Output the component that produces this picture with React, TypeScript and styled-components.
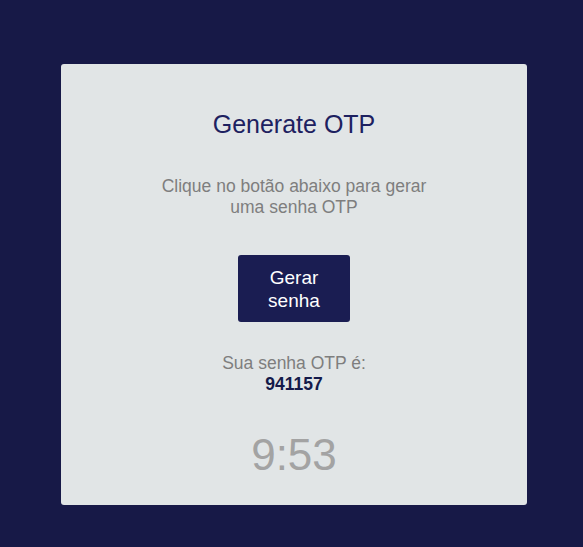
import React from "react";
import styled, { createGlobalStyle } from "styled-components";

const Global = createGlobalStyle`
  html, body { margin: 0; padding: 0; background: #171947; }
  body { font-family: "Liberation Sans", Arial, sans-serif; }
`;

const Page = styled.div`
  min-height: 547px;
  box-sizing: border-box;
  padding: 64px 56px 42px 61px;
  display: flex;
  justify-content: center;
  align-items: flex-start;
`;

const Card = styled.div`
  width: 466px;
  height: 441px;
  box-sizing: border-box;
  background: #e1e5e6;
  border-radius: 3px;
  display: flex;
  flex-direction: column;
  align-items: center;
  padding-top: 45px;
  text-align: center;
`;

const Title = styled.h1`
  margin: 0;
  font-size: 25px;
  font-weight: 400;
  color: #1d2160;
  line-height: 30px;
`;

const Description = styled.p`
  margin: 37px 0 0;
  width: 290px;
  font-size: 17.5px;
  line-height: 21px;
  color: #7e7e7e;
`;

const Button = styled.button`
  margin-top: 37px;
  width: 112px;
  height: 67px;
  border: none;
  border-radius: 3px;
  background: #1a1d52;
  color: #ffffff;
  font-family: "Liberation Sans", Arial, sans-serif;
  font-size: 19px;
  line-height: 23px;
  padding: 0 20px;
  cursor: pointer;
`;

const Result = styled.div`
  margin-top: 31px;
  font-size: 17.5px;
  line-height: 21px;
  color: #7e7e7e;
`;

const Code = styled.div`
  font-weight: 700;
  color: #141a4a;
`;

const Timer = styled.div`
  margin-top: 35px;
  font-size: 44px;
  line-height: 50px;
  color: #a3a3a3;
`;

export default function App() {
  return (
    <>
      <Global />
      <Page>
        <Card>
          <Title>Generate OTP</Title>
          <Description>Clique no botão abaixo para gerar uma senha OTP</Description>
          <Button>Gerar senha</Button>
          <Result>
            Sua senha OTP é:
            <Code>941157</Code>
          </Result>
          <Timer>9:53</Timer>
        </Card>
      </Page>
    </>
  );
}
